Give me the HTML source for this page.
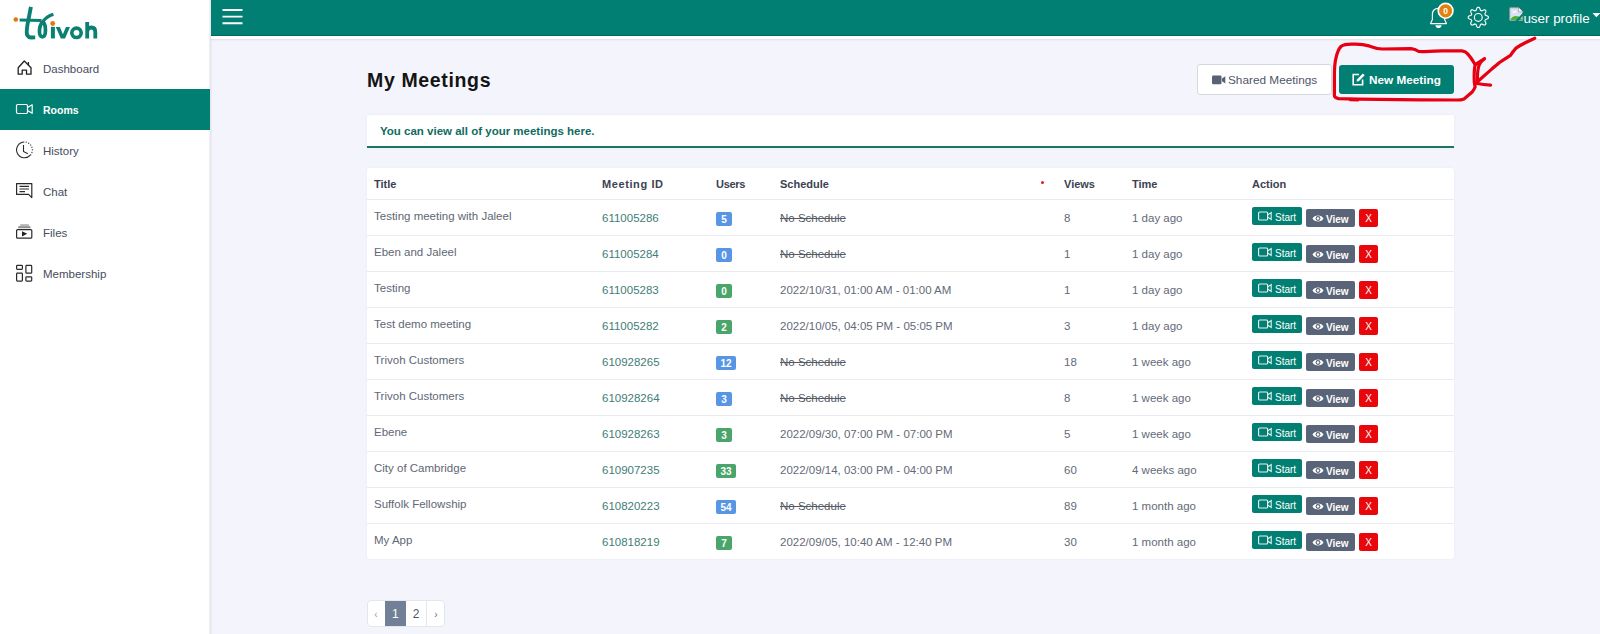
<!DOCTYPE html>
<html><head><meta charset="utf-8">
<style>
*{margin:0;padding:0;box-sizing:border-box}
html,body{width:1600px;height:634px;overflow:hidden;background:#f4f5fc;font-family:"Liberation Sans",sans-serif}
.abs{position:absolute}
#side{position:absolute;left:0;top:0;width:211px;height:634px;background:linear-gradient(to right,#fff 208.3px,#f3f3f6 209.5px,#e5e6eb 210.5px,#e8e9f0 211px);box-shadow:1px 0 1px rgba(0,0,0,0.03)}
#top{position:absolute;left:211px;top:0;width:1389px;height:36px;background:#027f73;border-bottom:1px solid #036559}
#topstrip{position:absolute;left:211px;top:36px;width:1389px;height:3px;background:#fff;box-shadow:0 1px 2px rgba(0,0,0,0.09)}
.nav{position:absolute;left:0;width:210px;height:41px;font-size:11.5px;color:#454c5c}
.nav span{position:absolute;left:43px;top:15px;line-height:12px;white-space:nowrap}
.nav svg{position:absolute;left:0;top:0}
.nav.act{background:#027f73;color:#fff;font-weight:bold;font-size:10.5px}
h1{position:absolute;left:367px;top:70px;font-size:19.5px;line-height:20px;letter-spacing:0.65px;font-weight:bold;color:#141414;white-space:nowrap}
.card{position:absolute;background:#fff;border-radius:3px;box-shadow:0 0 3px rgba(0,0,0,0.05)}
.info{left:367px;top:115px;width:1087px;height:33px;border-bottom:2px solid #1a7468;border-radius:0;}
.info span{position:absolute;left:13px;top:10.7px;font-size:11.5px;line-height:11px;font-weight:bold;color:#0f6c61;white-space:nowrap}
.tcard{left:367px;top:168px;width:1087px;height:391px}
.th{position:absolute;top:179px;font-size:11px;line-height:11px;font-weight:bold;color:#3c4252;white-space:nowrap}
.rdot{position:absolute;left:1041px;top:181px;width:3px;height:3px;border-radius:50%;background:#e31b1b}
.hr{position:absolute;left:367px;width:1087px;height:1px;background:#e9ebf1}
.row{position:absolute;left:0;width:1600px;height:36px}
.row>div{position:absolute;white-space:nowrap}
.tt{left:374px;top:11px;font-size:11.5px;line-height:12px;color:#616776}
.mid{left:602px;top:13px;font-size:11.5px;line-height:12px;color:#3f7d77}
.bdg{left:716px;top:13px;width:16px;height:14px;border-radius:2px;color:#fff;font-size:10px;font-weight:bold;line-height:15px;text-align:center}
.bdg.w2{width:20px}
.bdg.b{background:#5895e4}
.bdg.g{background:#4aa56a}
.sch{left:780px;top:12.5px;font-size:11.5px;line-height:12px;color:#646a78}
.sch.ns{text-decoration:line-through;text-decoration-thickness:1px;color:#545a66}
.vw{left:1064px;top:13px;font-size:11.5px;line-height:12px;color:#646a78}
.tm{left:1132px;top:13px;font-size:11.5px;line-height:12px;color:#646a78}
.bs{left:1252px;top:8px;width:50px;height:18px;background:#027f73;border-radius:2px;color:#fff;font-size:10px}
.bs .cam{position:absolute;left:6px;top:3.5px}
.bs span{position:absolute;left:23px;top:6px;line-height:10px}
.bv{left:1306px;top:10px;width:49px;height:18px;background:#5a6478;border-radius:2px;color:#fff;font-size:10px;font-weight:bold}
.bv .eye{position:absolute;left:6px;top:4.5px}
.bv span{position:absolute;left:20px;top:5.5px;line-height:10px}
.bx{left:1359px;top:10px;width:19px;height:18px;background:#e8070b;border-radius:2px;color:#fff;font-size:10px;line-height:20px;text-align:center}
.btn-sh{position:absolute;left:1197px;top:64px;width:135px;height:31px;background:#fff;border:1px solid #d5d8df;border-radius:3px}
.btn-sh span{position:absolute;left:30px;top:9px;font-size:11.8px;line-height:12px;color:#4f5668;white-space:nowrap}
.btn-nm{position:absolute;left:1339px;top:65px;width:115px;height:29px;background:#027f73;border-radius:3px}
.btn-nm span{position:absolute;left:30px;top:9px;font-size:11.75px;line-height:12px;font-weight:bold;color:#fff;white-space:nowrap}
.pag{position:absolute;left:367px;top:600px;width:78px;height:27px;background:#fff;border:1px solid #e3e6ee;border-radius:4px;overflow:hidden;font-size:12px;color:#5a6070}
.pag div{position:absolute;top:0;height:25px;line-height:27px;text-align:center}
</style></head><body>
<div id="side">
  <svg class="abs" style="left:0;top:0" width="110" height="50" viewBox="0 0 110 50">
    <g fill="none" stroke="#0a8073" stroke-linecap="butt">
      <path d="M30.9 6.8 L27.6 24 Q26 33 27.4 35.4 Q28.8 37.6 31.2 37.5 L35.2 37.4" stroke-width="3.9"/>
      <path d="M19.6 19.9 L41.5 20.6" stroke-width="3"/>
      <path d="M43 21.8 C38.8 25, 38 36.8, 42.3 36.8 C46.6 36.8, 46.2 25, 43 21.8 Z" stroke-width="3.7"/>
      <path d="M43 21.5 Q46.5 16.5 53.4 14.3" stroke-width="3"/>
      <path d="M52.9 26.8 V38.4" stroke-width="4"/>
      <path d="M55.8 27 H59.9 L62.9 34.2 L65.9 27 H70 L65 38.6 H60.8 Z" fill="#0a8073" stroke="none"/>
      <circle cx="76.5" cy="32.8" r="4.7" stroke-width="3.6"/>
      <path d="M87.2 22 V38.6 M87.2 38.6 V32 Q87.2 27.5 91.4 27.5 Q95.3 27.5 95.3 32 V38.6" stroke-width="3.8"/>
    </g>
    <circle cx="15.8" cy="19.5" r="2.3" fill="#e0780f"/>
    <circle cx="52.7" cy="23.5" r="2.4" fill="#e0780f"/>
  </svg>
  <div class="nav" style="top:48px"><svg width="40" height="41" viewBox="0 48 40 41"><g fill="none" stroke="#222" stroke-width="1.3"><path d="M18.2 67.8 L24.3 61 L31 67.8 V74.2 H26.5 V70.2 H22.2 V74.2 H18.2 Z" stroke-linejoin="round"/><path d="M28.4 62 V65"/></g></svg><span>Dashboard</span></div>
  <div class="nav act" style="top:89px"><svg width="40" height="41" viewBox="0 89 40 41"><g fill="none" stroke="#fff" stroke-width="1.2" stroke-linejoin="round"><rect x="16.5" y="104.5" width="11" height="9" rx="1.2"/><path d="M27.5 107.5 L32.2 104.8 V113.3 L27.5 110.6"/></g></svg><span>Rooms</span></div>
  <div class="nav" style="top:130px"><svg width="40" height="41" viewBox="0 130 40 41"><g fill="none" stroke="#2a2a2a" stroke-width="1.1"><path d="M24.3 142 A7.9 7.9 0 1 0 30.35 155.18"/><path d="M30.35 155.18 A7.9 7.9 0 0 0 24.3 142" stroke-dasharray="1.1 1.5"/><path d="M23.5 145.1 V151.4 L27.8 153.7"/></g></svg><span>History</span></div>
  <div class="nav" style="top:171px"><svg width="40" height="41" viewBox="0 171 40 41"><g fill="none" stroke="#2a2a2a" stroke-width="1.2"><path d="M16.6 183.6 H31.8 V197.6 L28.6 194.4 H16.6 Z" stroke-linejoin="round"/><path d="M19.5 186.3 H29 M19.5 189 H29 M19.5 191.6 H25"/></g></svg><span>Chat</span></div>
  <div class="nav" style="top:212px"><svg width="40" height="41" viewBox="0 212 40 41"><g fill="none" stroke="#2a2a2a" stroke-width="1.2"><rect x="16.6" y="229.6" width="15.2" height="8.6" rx="1"/></g><rect x="20.2" y="224.2" width="8.7" height="1.9" fill="#b4b4b4"/><rect x="18.2" y="226.2" width="12.3" height="2" fill="#8e8e8e"/><path d="M22 231.2 L27.2 233.8 L22 236.4 Z" fill="#222"/></svg><span>Files</span></div>
  <div class="nav" style="top:253px"><svg width="40" height="41" viewBox="0 253 40 41"><g fill="none" stroke="#2a2a2a" stroke-width="1.2"><rect x="16.6" y="265.4" width="5.8" height="4" rx="0.8"/><rect x="16.6" y="273.1" width="5.8" height="8" rx="0.8"/><rect x="25.9" y="265.4" width="5.8" height="7.8" rx="0.8"/><rect x="25.9" y="276.8" width="5.8" height="4.3" rx="0.8"/></g></svg><span>Membership</span></div>
</div>
<div id="top">
  <svg class="abs" style="left:11px;top:9px" width="22" height="18" viewBox="0 0 22 18"><g stroke="#fff" stroke-width="1.9"><path d="M0.5 1 H20.5 M0.5 7.6 H20.5 M0.5 14.3 H20.5"/></g></svg>
</div>
<div id="topstrip"></div>
<h1>My Meetings</h1>
<div class="btn-sh"><svg class="abs" style="left:14px;top:10px" width="14" height="10" viewBox="0 0 14 10"><rect x="0" y="0.6" width="9.5" height="8.6" rx="1.2" fill="#596175"/><path d="M10 3.6 L13.3 1.2 V8.6 L10 6.2 Z" fill="#596175"/></svg><span>Shared Meetings</span></div>
<div class="btn-nm"><svg class="abs" style="left:12px;top:7px" width="15" height="15" viewBox="0 0 15 15"><path d="M8 2.5 H2.2 V12.8 H11.6 V7.6" fill="none" stroke="#fff" stroke-width="1.6"/><path d="M5.6 9.6 L6 7.4 L11.8 1.4 L13.7 3.3 L7.8 9.2 Z" fill="#fff"/></svg><span>New Meeting</span></div>
<div class="card info"><span>You can view all of your meetings here.</span></div>
<div class="card tcard"></div>
<div class="th" style="left:374px">Title</div>
<div class="th" style="left:602px;letter-spacing:0.6px">Meeting ID</div>
<div class="th" style="left:716px;letter-spacing:-0.3px">Users</div>
<div class="th" style="left:780px">Schedule</div>
<div class="rdot"></div>
<div class="th" style="left:1064px">Views</div>
<div class="th" style="left:1132px">Time</div>
<div class="th" style="left:1252px">Action</div>
<div class="hr" style="top:199px"></div>
<div class="row" style="top:199px">
<div class="tt">Testing meeting with Jaleel</div>
<div class="mid">611005286</div>
<div class="bdg b">5</div>
<div class="sch ns">No Schedule</div>
<div class="vw">8</div>
<div class="tm">1 day ago</div>
<div class="bs"><svg class="cam" width="14" height="10" viewBox="0 0 14 10"><rect x="0.6" y="1" width="9" height="8" rx="1" fill="none" stroke="#e8f1ef" stroke-width="1.1"/><path d="M9.6 4 L13.2 1.6 V8.4 L9.6 6" fill="none" stroke="#e8f1ef" stroke-width="1.1"/></svg><span>Start</span></div>
<div class="bv"><svg class="eye" width="12" height="9" viewBox="0 0 12 9"><path d="M0.5 4.5 C2.2 0.6 9.8 0.6 11.5 4.5 C9.8 8.4 2.2 8.4 0.5 4.5 Z" fill="#fff"/><circle cx="6" cy="4.5" r="2.4" fill="#5a6478"/><circle cx="6" cy="4.5" r="1.3" fill="#fff"/></svg><span>View</span></div>
<div class="bx">X</div>
</div>
<div class="hr" style="top:235px"></div>
<div class="row" style="top:235px">
<div class="tt">Eben and Jaleel</div>
<div class="mid">611005284</div>
<div class="bdg b">0</div>
<div class="sch ns">No Schedule</div>
<div class="vw">1</div>
<div class="tm">1 day ago</div>
<div class="bs"><svg class="cam" width="14" height="10" viewBox="0 0 14 10"><rect x="0.6" y="1" width="9" height="8" rx="1" fill="none" stroke="#e8f1ef" stroke-width="1.1"/><path d="M9.6 4 L13.2 1.6 V8.4 L9.6 6" fill="none" stroke="#e8f1ef" stroke-width="1.1"/></svg><span>Start</span></div>
<div class="bv"><svg class="eye" width="12" height="9" viewBox="0 0 12 9"><path d="M0.5 4.5 C2.2 0.6 9.8 0.6 11.5 4.5 C9.8 8.4 2.2 8.4 0.5 4.5 Z" fill="#fff"/><circle cx="6" cy="4.5" r="2.4" fill="#5a6478"/><circle cx="6" cy="4.5" r="1.3" fill="#fff"/></svg><span>View</span></div>
<div class="bx">X</div>
</div>
<div class="hr" style="top:271px"></div>
<div class="row" style="top:271px">
<div class="tt">Testing</div>
<div class="mid">611005283</div>
<div class="bdg g">0</div>
<div class="sch">2022/10/31, 01:00 AM - 01:00 AM</div>
<div class="vw">1</div>
<div class="tm">1 day ago</div>
<div class="bs"><svg class="cam" width="14" height="10" viewBox="0 0 14 10"><rect x="0.6" y="1" width="9" height="8" rx="1" fill="none" stroke="#e8f1ef" stroke-width="1.1"/><path d="M9.6 4 L13.2 1.6 V8.4 L9.6 6" fill="none" stroke="#e8f1ef" stroke-width="1.1"/></svg><span>Start</span></div>
<div class="bv"><svg class="eye" width="12" height="9" viewBox="0 0 12 9"><path d="M0.5 4.5 C2.2 0.6 9.8 0.6 11.5 4.5 C9.8 8.4 2.2 8.4 0.5 4.5 Z" fill="#fff"/><circle cx="6" cy="4.5" r="2.4" fill="#5a6478"/><circle cx="6" cy="4.5" r="1.3" fill="#fff"/></svg><span>View</span></div>
<div class="bx">X</div>
</div>
<div class="hr" style="top:307px"></div>
<div class="row" style="top:307px">
<div class="tt">Test demo meeting</div>
<div class="mid">611005282</div>
<div class="bdg g">2</div>
<div class="sch">2022/10/05, 04:05 PM - 05:05 PM</div>
<div class="vw">3</div>
<div class="tm">1 day ago</div>
<div class="bs"><svg class="cam" width="14" height="10" viewBox="0 0 14 10"><rect x="0.6" y="1" width="9" height="8" rx="1" fill="none" stroke="#e8f1ef" stroke-width="1.1"/><path d="M9.6 4 L13.2 1.6 V8.4 L9.6 6" fill="none" stroke="#e8f1ef" stroke-width="1.1"/></svg><span>Start</span></div>
<div class="bv"><svg class="eye" width="12" height="9" viewBox="0 0 12 9"><path d="M0.5 4.5 C2.2 0.6 9.8 0.6 11.5 4.5 C9.8 8.4 2.2 8.4 0.5 4.5 Z" fill="#fff"/><circle cx="6" cy="4.5" r="2.4" fill="#5a6478"/><circle cx="6" cy="4.5" r="1.3" fill="#fff"/></svg><span>View</span></div>
<div class="bx">X</div>
</div>
<div class="hr" style="top:343px"></div>
<div class="row" style="top:343px">
<div class="tt">Trivoh Customers</div>
<div class="mid">610928265</div>
<div class="bdg b w2">12</div>
<div class="sch ns">No Schedule</div>
<div class="vw">18</div>
<div class="tm">1 week ago</div>
<div class="bs"><svg class="cam" width="14" height="10" viewBox="0 0 14 10"><rect x="0.6" y="1" width="9" height="8" rx="1" fill="none" stroke="#e8f1ef" stroke-width="1.1"/><path d="M9.6 4 L13.2 1.6 V8.4 L9.6 6" fill="none" stroke="#e8f1ef" stroke-width="1.1"/></svg><span>Start</span></div>
<div class="bv"><svg class="eye" width="12" height="9" viewBox="0 0 12 9"><path d="M0.5 4.5 C2.2 0.6 9.8 0.6 11.5 4.5 C9.8 8.4 2.2 8.4 0.5 4.5 Z" fill="#fff"/><circle cx="6" cy="4.5" r="2.4" fill="#5a6478"/><circle cx="6" cy="4.5" r="1.3" fill="#fff"/></svg><span>View</span></div>
<div class="bx">X</div>
</div>
<div class="hr" style="top:379px"></div>
<div class="row" style="top:379px">
<div class="tt">Trivoh Customers</div>
<div class="mid">610928264</div>
<div class="bdg b">3</div>
<div class="sch ns">No Schedule</div>
<div class="vw">8</div>
<div class="tm">1 week ago</div>
<div class="bs"><svg class="cam" width="14" height="10" viewBox="0 0 14 10"><rect x="0.6" y="1" width="9" height="8" rx="1" fill="none" stroke="#e8f1ef" stroke-width="1.1"/><path d="M9.6 4 L13.2 1.6 V8.4 L9.6 6" fill="none" stroke="#e8f1ef" stroke-width="1.1"/></svg><span>Start</span></div>
<div class="bv"><svg class="eye" width="12" height="9" viewBox="0 0 12 9"><path d="M0.5 4.5 C2.2 0.6 9.8 0.6 11.5 4.5 C9.8 8.4 2.2 8.4 0.5 4.5 Z" fill="#fff"/><circle cx="6" cy="4.5" r="2.4" fill="#5a6478"/><circle cx="6" cy="4.5" r="1.3" fill="#fff"/></svg><span>View</span></div>
<div class="bx">X</div>
</div>
<div class="hr" style="top:415px"></div>
<div class="row" style="top:415px">
<div class="tt">Ebene</div>
<div class="mid">610928263</div>
<div class="bdg g">3</div>
<div class="sch">2022/09/30, 07:00 PM - 07:00 PM</div>
<div class="vw">5</div>
<div class="tm">1 week ago</div>
<div class="bs"><svg class="cam" width="14" height="10" viewBox="0 0 14 10"><rect x="0.6" y="1" width="9" height="8" rx="1" fill="none" stroke="#e8f1ef" stroke-width="1.1"/><path d="M9.6 4 L13.2 1.6 V8.4 L9.6 6" fill="none" stroke="#e8f1ef" stroke-width="1.1"/></svg><span>Start</span></div>
<div class="bv"><svg class="eye" width="12" height="9" viewBox="0 0 12 9"><path d="M0.5 4.5 C2.2 0.6 9.8 0.6 11.5 4.5 C9.8 8.4 2.2 8.4 0.5 4.5 Z" fill="#fff"/><circle cx="6" cy="4.5" r="2.4" fill="#5a6478"/><circle cx="6" cy="4.5" r="1.3" fill="#fff"/></svg><span>View</span></div>
<div class="bx">X</div>
</div>
<div class="hr" style="top:451px"></div>
<div class="row" style="top:451px">
<div class="tt">City of Cambridge</div>
<div class="mid">610907235</div>
<div class="bdg g w2">33</div>
<div class="sch">2022/09/14, 03:00 PM - 04:00 PM</div>
<div class="vw">60</div>
<div class="tm">4 weeks ago</div>
<div class="bs"><svg class="cam" width="14" height="10" viewBox="0 0 14 10"><rect x="0.6" y="1" width="9" height="8" rx="1" fill="none" stroke="#e8f1ef" stroke-width="1.1"/><path d="M9.6 4 L13.2 1.6 V8.4 L9.6 6" fill="none" stroke="#e8f1ef" stroke-width="1.1"/></svg><span>Start</span></div>
<div class="bv"><svg class="eye" width="12" height="9" viewBox="0 0 12 9"><path d="M0.5 4.5 C2.2 0.6 9.8 0.6 11.5 4.5 C9.8 8.4 2.2 8.4 0.5 4.5 Z" fill="#fff"/><circle cx="6" cy="4.5" r="2.4" fill="#5a6478"/><circle cx="6" cy="4.5" r="1.3" fill="#fff"/></svg><span>View</span></div>
<div class="bx">X</div>
</div>
<div class="hr" style="top:487px"></div>
<div class="row" style="top:487px">
<div class="tt">Suffolk Fellowship</div>
<div class="mid">610820223</div>
<div class="bdg b w2">54</div>
<div class="sch ns">No Schedule</div>
<div class="vw">89</div>
<div class="tm">1 month ago</div>
<div class="bs"><svg class="cam" width="14" height="10" viewBox="0 0 14 10"><rect x="0.6" y="1" width="9" height="8" rx="1" fill="none" stroke="#e8f1ef" stroke-width="1.1"/><path d="M9.6 4 L13.2 1.6 V8.4 L9.6 6" fill="none" stroke="#e8f1ef" stroke-width="1.1"/></svg><span>Start</span></div>
<div class="bv"><svg class="eye" width="12" height="9" viewBox="0 0 12 9"><path d="M0.5 4.5 C2.2 0.6 9.8 0.6 11.5 4.5 C9.8 8.4 2.2 8.4 0.5 4.5 Z" fill="#fff"/><circle cx="6" cy="4.5" r="2.4" fill="#5a6478"/><circle cx="6" cy="4.5" r="1.3" fill="#fff"/></svg><span>View</span></div>
<div class="bx">X</div>
</div>
<div class="hr" style="top:523px"></div>
<div class="row" style="top:523px">
<div class="tt">My App</div>
<div class="mid">610818219</div>
<div class="bdg g">7</div>
<div class="sch">2022/09/05, 10:40 AM - 12:40 PM</div>
<div class="vw">30</div>
<div class="tm">1 month ago</div>
<div class="bs"><svg class="cam" width="14" height="10" viewBox="0 0 14 10"><rect x="0.6" y="1" width="9" height="8" rx="1" fill="none" stroke="#e8f1ef" stroke-width="1.1"/><path d="M9.6 4 L13.2 1.6 V8.4 L9.6 6" fill="none" stroke="#e8f1ef" stroke-width="1.1"/></svg><span>Start</span></div>
<div class="bv"><svg class="eye" width="12" height="9" viewBox="0 0 12 9"><path d="M0.5 4.5 C2.2 0.6 9.8 0.6 11.5 4.5 C9.8 8.4 2.2 8.4 0.5 4.5 Z" fill="#fff"/><circle cx="6" cy="4.5" r="2.4" fill="#5a6478"/><circle cx="6" cy="4.5" r="1.3" fill="#fff"/></svg><span>View</span></div>
<div class="bx">X</div>
</div><div class="pag">
  <div style="left:0;width:16px;color:#9aa0ad;font-size:10px">&#8249;</div>
  <div style="left:16.5px;width:21.5px;background:#718096;color:#fff">1</div>
  <div style="left:38px;width:21px;border-right:1px solid #e3e6ee;color:#4f5666">2</div>
  <div style="left:59px;width:18px;font-size:10px;color:#6a7080">&#8250;</div>
</div>
<svg class="abs" style="left:0;top:0" width="1600" height="634" viewBox="0 0 1600 634">
  <g fill="none" stroke="#fff" stroke-width="1.15" stroke-linejoin="round">
    <path d="M1430.5 23.6 H1446.5 L1444.6 19.5 V14.5 Q1444.6 8.4 1438.5 8.4 Q1432.4 8.4 1432.4 14.5 V19.5 Z"/>
    <path d="M1488.35 17.40 L1488.34 17.79 L1488.32 18.19 L1487.92 18.54 L1487.41 18.84 L1486.83 19.10 L1486.25 19.31 L1485.72 19.49 L1485.29 19.67 L1485.20 19.94 L1485.09 20.21 L1484.97 20.48 L1484.85 20.74 L1485.03 21.17 L1485.27 21.67 L1485.53 22.23 L1485.76 22.82 L1485.91 23.40 L1485.94 23.93 L1485.68 24.22 L1485.41 24.51 L1485.12 24.78 L1484.83 25.04 L1484.30 25.01 L1483.72 24.86 L1483.13 24.63 L1482.57 24.37 L1482.07 24.13 L1481.64 23.95 L1481.38 24.07 L1481.11 24.19 L1480.84 24.30 L1480.57 24.39 L1480.39 24.82 L1480.21 25.35 L1480.00 25.93 L1479.74 26.51 L1479.44 27.02 L1479.09 27.42 L1478.69 27.44 L1478.30 27.45 L1477.91 27.44 L1477.51 27.42 L1477.16 27.02 L1476.86 26.51 L1476.60 25.93 L1476.39 25.35 L1476.21 24.82 L1476.03 24.39 L1475.76 24.30 L1475.49 24.19 L1475.22 24.07 L1474.96 23.95 L1474.53 24.13 L1474.03 24.37 L1473.47 24.63 L1472.88 24.86 L1472.30 25.01 L1471.77 25.04 L1471.48 24.78 L1471.19 24.51 L1470.92 24.22 L1470.66 23.93 L1470.69 23.40 L1470.84 22.82 L1471.07 22.23 L1471.33 21.67 L1471.57 21.17 L1471.75 20.74 L1471.63 20.48 L1471.51 20.21 L1471.40 19.94 L1471.31 19.67 L1470.88 19.49 L1470.35 19.31 L1469.77 19.10 L1469.19 18.84 L1468.68 18.54 L1468.28 18.19 L1468.26 17.79 L1468.25 17.40 L1468.26 17.01 L1468.28 16.61 L1468.68 16.26 L1469.19 15.96 L1469.77 15.70 L1470.35 15.49 L1470.88 15.31 L1471.31 15.13 L1471.40 14.86 L1471.51 14.59 L1471.63 14.32 L1471.75 14.06 L1471.57 13.63 L1471.33 13.13 L1471.07 12.57 L1470.84 11.98 L1470.69 11.40 L1470.66 10.87 L1470.92 10.58 L1471.19 10.29 L1471.48 10.02 L1471.77 9.76 L1472.30 9.79 L1472.88 9.94 L1473.47 10.17 L1474.03 10.43 L1474.53 10.67 L1474.96 10.85 L1475.22 10.73 L1475.49 10.61 L1475.76 10.50 L1476.03 10.41 L1476.21 9.98 L1476.39 9.45 L1476.60 8.87 L1476.86 8.29 L1477.16 7.78 L1477.51 7.38 L1477.91 7.36 L1478.30 7.35 L1478.69 7.36 L1479.09 7.38 L1479.44 7.78 L1479.74 8.29 L1480.00 8.87 L1480.21 9.45 L1480.39 9.98 L1480.57 10.41 L1480.84 10.50 L1481.11 10.61 L1481.38 10.73 L1481.64 10.85 L1482.07 10.67 L1482.57 10.43 L1483.13 10.17 L1483.72 9.94 L1484.30 9.79 L1484.83 9.76 L1485.12 10.02 L1485.41 10.29 L1485.68 10.58 L1485.94 10.87 L1485.91 11.40 L1485.76 11.98 L1485.53 12.57 L1485.27 13.13 L1485.03 13.63 L1484.85 14.06 L1484.97 14.32 L1485.09 14.59 L1485.20 14.86 L1485.29 15.13 L1485.72 15.31 L1486.25 15.49 L1486.83 15.70 L1487.41 15.96 L1487.92 16.26 L1488.32 16.61 L1488.34 17.01 Z"/>
    <circle cx="1478.3" cy="17.4" r="3.9"/>
  </g>
  <path d="M1435.4 25.2 H1441.6 Q1441.2 28 1438.5 28 Q1435.8 28 1435.4 25.2 Z" fill="#fff"/>
  <circle cx="1445.6" cy="10.8" r="7.4" fill="#e0820e" stroke="#fff" stroke-width="1.6"/>
  <text x="1445.6" y="13.8" font-family="Liberation Sans" font-size="8.5" font-weight="bold" fill="#fff" text-anchor="middle">0</text>
  <g>
    <path d="M1509.8 7.8 H1518.6 L1522.6 11.8 V20.4 H1509.8 Z" fill="#d8e2f6" stroke="#a99b9b" stroke-width="0.9"/>
    <path d="M1518.6 7.8 V11.8 H1522.6" fill="#fff" stroke="#a99b9b" stroke-width="0.8"/>
    <path d="M1510.3 20 Q1512 16 1516 16 Q1519 16 1521 18 L1522.2 20 Z" fill="#4bb33a"/>
    <path d="M1511.5 12.6 Q1512.5 11.4 1513.6 11.6 Q1514.3 10.2 1515.6 11.3 Q1516.8 11.3 1516.6 12.6 Z" fill="#fff"/><path d="M1515.4 21 L1518.2 21 L1523.2 15.6 L1523.2 12.6 Z" fill="#027f73"/>
  </g>
  <text x="1523.4" y="22.5" font-family="Liberation Sans" font-size="13.4" fill="#fff">user profile</text>
  <path d="M1592.5 13 H1600 V13.4 L1596.3 17.2 Z" fill="#fff"/>
  <g fill="none" stroke="#e60012" stroke-width="3.2" stroke-linecap="round" stroke-linejoin="round">
    <path d="M1341 46.4 Q1344.5 44 1352.6 44.2 Q1362 43.8 1369 45.9 Q1376 48.6 1382.4 49 L1411 48.7 Q1415 49.2 1418.8 51.5 Q1421 51.9 1442 50.9 L1462 50.9 Q1465.8 51.5 1467.5 53.7 Q1470 56 1475.2 64.7 Q1473.8 70 1474.3 82.4 Q1474.8 86 1475.2 86.8 Q1474 90 1471.9 92.3 L1464 98.9 Q1461 100 1457.5 100 L1420 99.8 L1358 99.1 L1338.6 98.6 Q1334.5 97.8 1334.4 95.6 L1334.4 80 Q1334.2 64 1336 58 Q1337.5 50.4 1341 46.4 Z"/>
    <path d="M1350 100.2 L1358 100.4" stroke-width="2"/>
    <path d="M1475.2 64.7 L1484.6 58.6 Q1480.5 61.5 1479.2 65 Q1477.2 70 1477.4 80.2 L1476.3 83.5"/>
    <path d="M1477.4 83.5 Q1483 84.6 1490.6 85.1"/>
    <path d="M1534.8 38.2 Q1522 44 1516 48.1 Q1513 51.5 1510.5 55.3 Q1505 58.8 1499.5 62.5 Q1496 65.5 1491.7 69.1 L1477.4 81.8"/>
  </g>
</svg>
</body></html>
